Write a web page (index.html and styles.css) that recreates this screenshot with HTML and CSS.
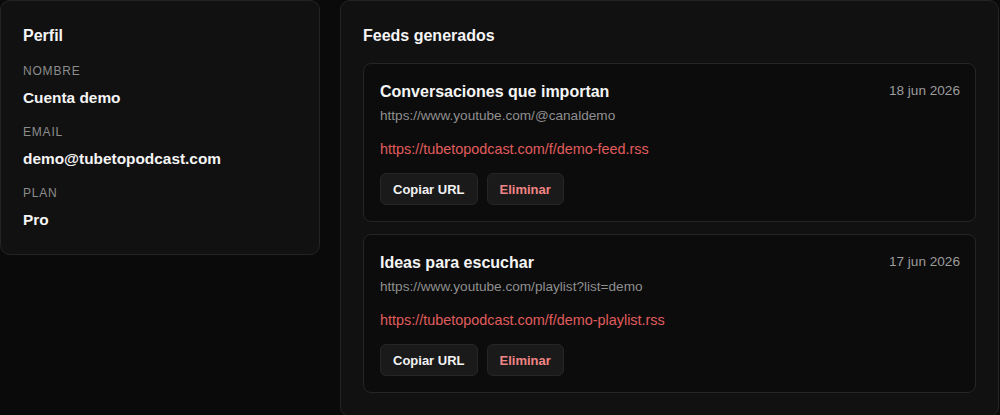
FILE: index.html
```html
<!DOCTYPE html>
<html lang="es">
<head>
    <meta charset="UTF-8">
    <meta name="viewport" content="width=device-width, initial-scale=1.0">
    <title>Cuenta - TubeToPodcast</title>
    <link rel="stylesheet" href="styles.css">
</head>
<body>
    <div class="account">
        <section class="panel profile">
            <h2>Perfil</h2>
            <div class="field">
                <span class="label">Nombre</span>
                <span class="value">Cuenta demo</span>
            </div>
            <div class="field">
                <span class="label">Email</span>
                <span class="value">demo@tubetopodcast.com</span>
            </div>
            <div class="field">
                <span class="label">Plan</span>
                <span class="value">Pro</span>
            </div>
        </section>

        <section class="panel feeds">
            <h2>Feeds generados</h2>
            <div class="feed-list">
                <div class="feed">
                    <div class="feed-head">
                        <h3>Conversaciones que importan</h3>
                        <span class="date">18 jun 2026</span>
                    </div>
                    <p class="source">https://www.youtube.com/@canaldemo</p>
                    <a class="rss" href="#">https://tubetopodcast.com/f/demo-feed.rss</a>
                    <div class="actions">
                        <button class="btn">Copiar URL</button>
                        <button class="btn danger">Eliminar</button>
                    </div>
                </div>
                <div class="feed">
                    <div class="feed-head">
                        <h3>Ideas para escuchar</h3>
                        <span class="date">17 jun 2026</span>
                    </div>
                    <p class="source">https://www.youtube.com/playlist?list=demo</p>
                    <a class="rss" href="#">https://tubetopodcast.com/f/demo-playlist.rss</a>
                    <div class="actions">
                        <button class="btn">Copiar URL</button>
                        <button class="btn danger">Eliminar</button>
                    </div>
                </div>
            </div>
        </section>
    </div>
</body>
</html>
```

FILE: styles.css
```css
body {
    margin: 0;
    background-color: #0a0a0a;
    color: #f5f5f5;
    font-family: "Liberation Sans", Arial, sans-serif;
}
.account {
    display: grid;
    grid-template-columns: 320px 1fr;
    gap: 20px;
    width: 999px;
    align-items: start;
}
.panel {
    background-color: #111111;
    border: 1px solid #242424;
    border-radius: 10px;
    padding: 23px 22px;
}
h2 {
    margin: 0;
    font-size: 16px;
    line-height: 24px;
    font-weight: 700;
}
.field {
    display: flex;
    flex-direction: column;
    gap: 8px;
    margin-top: 15px;
}
.label {
    font-size: 12px;
    line-height: 16px;
    text-transform: uppercase;
    letter-spacing: 0.8px;
    color: #8c8c8c;
}
.value {
    font-size: 15.4px;
    line-height: 22px;
    font-weight: 700;
}
.feed-list {
    display: flex;
    flex-direction: column;
    gap: 12px;
    margin-top: 15px;
}
.feed {
    background-color: #0c0c0c;
    border: 1px solid #252525;
    border-radius: 8px;
    padding: 16px 15px 16px 16px;
}
.feed-head {
    display: flex;
    justify-content: space-between;
    align-items: center;
}
h3 {
    margin: 0;
    font-size: 16px;
    line-height: 24px;
    font-weight: 700;
}
.date {
    font-size: 13.6px;
    color: #9c9c9c;
    margin-top: -4px;
}
.source {
    margin: 2px 0 0;
    font-size: 13.6px;
    line-height: 20px;
    color: #8f8f8f;
}
.rss {
    display: block;
    margin-top: 13px;
    font-size: 14.4px;
    line-height: 20px;
    color: #e05d5d;
    text-decoration: none;
}
.actions {
    display: flex;
    gap: 9px;
    margin-top: 14px;
}
.btn {
    height: 32px;
    padding: 0 12px;
    font-family: "Liberation Sans", Arial, sans-serif;
    font-size: 13px;
    font-weight: 700;
    color: #f2f2f2;
    background-color: #1a1a1a;
    border: 1px solid #262626;
    border-radius: 6px;
    cursor: pointer;
}
.btn.danger {
    color: #f08585;
}
```
